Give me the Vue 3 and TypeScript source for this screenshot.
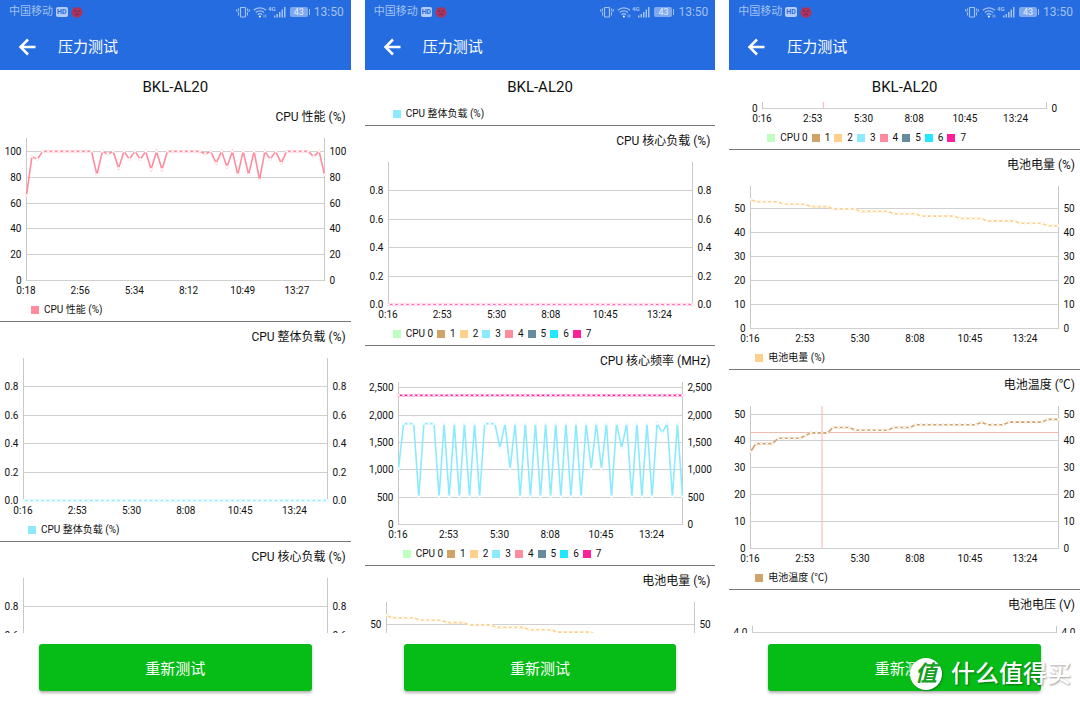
<script setup lang="ts">
import { computed, onBeforeUnmount, onMounted, ref } from 'vue'

interface LegendItem {
  color: string
  label: string
}

interface Series {
  color: string
  values: number[]
}

interface Chart {
  title: string
  inset: number
  max: number
  ticks: { value: number; label: string }[]
  times: string[]
  series: Series[]
  legend: LegendItem[]
}

interface Slice {
  chart: Chart
  from: number
  to: number
  marker?: number
}

const PLOT_TOP = 4
const PLOT_BOTTOM = 146
const CHART_HEIGHT = 164

const repeat = (value: number, count: number): number[] => Array(count).fill(value)
const runs = (pairs: [number, number][]): number[] => pairs.flatMap(([value, count]) => repeat(value, count))
const steps = (values: number[], digits = 0) =>
  values.map((value) => ({
    value,
    label: digits ? value.toFixed(digits) : value.toLocaleString('en-US'),
  }))

const times = ['0:16', '2:53', '5:30', '8:08', '10:45', '13:24']

const coreLegend: LegendItem[] = [
  { color: '#c0ffc0', label: 'CPU 0' },
  { color: '#cfa268', label: '1' },
  { color: '#ffd08c', label: '2' },
  { color: '#8ceaff', label: '3' },
  { color: '#ff8c9d', label: '4' },
  { color: '#668b9f', label: '5' },
  { color: '#22e8ff', label: '6' },
  { color: '#ff1f9b', label: '7' },
]

const performance: Chart = {
  title: 'CPU 性能 (%)',
  inset: 26,
  max: 110,
  ticks: steps([0, 20, 40, 60, 80, 100]),
  times: ['0:18', '2:56', '5:34', '8:12', '10:49', '13:27'],
  series: [
    {
      color: '#ff8c9d',
      values: [
        66, 96, 94, ...repeat(100, 10), 82, 100, 98, 100, 87, 100, 94, 100, 94, 100, 86, 100, 86,
        ...repeat(100, 7), 98, 100, 91, 100, 88, 100, 82, 100, 82, 100, 78, 100, 94, 100, 91,
        ...repeat(100, 5), 96, 100, 82,
      ],
    },
  ],
  legend: [{ color: '#ff8c9d', label: 'CPU 性能 (%)' }],
}

const totalLoad: Chart = {
  title: 'CPU 整体负载 (%)',
  inset: 23,
  max: 1,
  ticks: steps([0, 0.2, 0.4, 0.6, 0.8], 1),
  times,
  series: [{ color: '#8ceaff', values: repeat(0, 57) }],
  legend: [{ color: '#8ceaff', label: 'CPU 整体负载 (%)' }],
}

const coreLoad: Chart = {
  title: 'CPU 核心负载 (%)',
  inset: 23,
  max: 1,
  ticks: steps([0, 0.2, 0.4, 0.6, 0.8], 1),
  times,
  series: [{ color: '#ff6db8', values: repeat(0, 57) }],
  legend: coreLegend,
}

const H = 1844
const L = 509
const coreFrequency: Chart = {
  title: 'CPU 核心频率 (MHz)',
  inset: 33,
  max: 2596,
  ticks: steps([0, 500, 1000, 1500, 2000, 2500]),
  times,
  series: [
    {
      color: '#8ceaff',
      values: [
        1020, H, H, H, L, H, H, H, L, H, L, H, L, H, L, H, L, H, H, H, 1402, H, 1018, H, L, H, L, H, L,
        H, L, H, L, H, L, H, L, H, 1018, H, 1018, H, L, H, 1402, H, L, H, L, H, L, H, 1680, H, L, H, L,
      ],
    },
    { color: '#ff1f9b', values: repeat(2361, 57) },
  ],
  legend: coreLegend,
}

const batteryLevel: Chart = {
  title: '电池电量 (%)',
  inset: 21,
  max: 59.4,
  ticks: steps([0, 10, 20, 30, 40, 50]),
  times,
  series: [
    {
      color: '#ffd08c',
      values: runs([
        [54, 1], [53, 5], [52, 5], [51, 4], [50, 5], [49, 6], [48, 5], [47, 7], [46, 5], [45, 6], [44, 5], [43, 3],
      ]),
    },
  ],
  legend: [{ color: '#ffd08c', label: '电池电量 (%)' }],
}

const batteryTemperature: Chart = {
  title: '电池温度 (℃)',
  inset: 21,
  max: 52.8,
  ticks: steps([0, 10, 20, 30, 40, 50]),
  times,
  series: [
    {
      color: '#cfa268',
      values: runs([
        [36, 1], [39, 4], [41, 5], [42, 1], [43, 4], [45, 4], [44, 7], [45, 4], [46, 12], [47, 1], [46, 4], [47, 7], [48, 3],
      ]),
    },
  ],
  legend: [{ color: '#cfa268', label: '电池温度 (℃)' }],
}

const batteryVoltage: Chart = {
  title: '电池电压 (V)',
  inset: 23,
  max: 4.18,
  ticks: steps([4], 1),
  times,
  series: [],
  legend: [],
}

const whole = (chart: Chart, marker?: number): Slice => ({ chart, from: 0, to: CHART_HEIGHT, marker })

const phones: Slice[][] = [
  [whole(performance), whole(totalLoad), { chart: coreLoad, from: 0, to: 64 }],
  [
    { chart: totalLoad, from: CHART_HEIGHT, to: CHART_HEIGHT },
    whole(coreLoad),
    whole(coreFrequency),
    { chart: batteryLevel, from: 0, to: 36 },
  ],
  [
    { chart: coreFrequency, from: 140, to: CHART_HEIGHT, marker: 12 },
    whole(batteryLevel),
    whole(batteryTemperature, 13),
    { chart: batteryVoltage, from: 0, to: 12 },
  ],
]

const root = ref<HTMLElement | null>(null)
const width = ref(351)
let observer: ResizeObserver | undefined

onMounted(() => {
  observer = new ResizeObserver(() => {
    const phone = root.value?.querySelector('.phone')
    if (phone) width.value = Math.round(phone.getBoundingClientRect().width)
  })
  if (root.value) observer.observe(root.value)
})
onBeforeUnmount(() => observer?.disconnect())

const toY = (chart: Chart, value: number) => PLOT_BOTTOM - (value / chart.max) * (PLOT_BOTTOM - PLOT_TOP)

const layout = (slice: Slice) => {
  const { chart, from, to, marker } = slice
  const left = chart.inset
  const right = width.value - chart.inset - 1
  const count = (chart.series[0]?.values.length ?? 57) - 1
  const toX = (index: number) => left + (index / count) * (right - left)
  return {
    ...slice,
    left: left + 0.5,
    right: right + 0.5,
    ticks: chart.ticks
      .map((tick) => ({ label: tick.label, y: Math.round(toY(chart, tick.value)) }))
      .filter((tick) => tick.y > from - 4 && tick.y < to + 4),
    times: to === CHART_HEIGHT ? chart.times.map((label, i) => ({ label, x: toX(i * 10) })) : [],
    lines: chart.series.map((series) => {
      const points = series.values.map((value, i) => ({ x: toX(i) + 0.5, y: toY(chart, value) + 0.5 }))
      return { color: series.color, points, path: points.map((p) => `${p.x.toFixed(1)},${p.y.toFixed(1)}`).join(' ') }
    }),
    markerX: marker === undefined ? null : toX(marker) + 0.5,
    markerY: marker === undefined ? null : Math.round(toY(chart, chart.series[0].values[marker])) + 0.5,
  }
}

const screens = computed(() => phones.map((slices) => slices.map(layout)))
</script>

<template>
  <div ref="root" class="page">
    <main v-for="(slices, p) in screens" :key="p" class="phone">
      <header class="top">
        <div class="status">
          <span class="carrier">中国移动</span>
          <span class="hd">HD</span>
          <svg class="face" width="12" height="12" viewBox="0 0 12 12">
            <path d="M2.400 1 4 1.800a5 5 0 0 1 4 0L9.600 1l.5 2.200A5 5 0 0 1 6 11.600 5 5 0 0 1 1.900 3.200z" fill="#b03257" />
            <path d="m3 4.600 2.100 1M9 4.600l-2.100 1M4 8.900q2-1.800 4 0" stroke="#5a2a66" stroke-width="1" fill="none" />
          </svg>
          <span class="spacer"></span>
          <svg width="14" height="12" viewBox="0 0 14 12" fill="none" stroke="currentColor">
            <rect x="4.500" y="1.500" width="5" height="9.500" rx=".5" stroke-width="1.200" />
            <path d="M2.500 2.500v2l-.8 1 .8 1v3M.7 3v2.500M11.500 2.500v2l.8 1-.8 1v3M13.300 3v2.500" />
          </svg>
          <svg class="wifi" width="14" height="12" viewBox="0 0 14 12" fill="none" stroke="currentColor" stroke-width="1.300">
            <path d="M.8 4.300a9 9 0 0 1 12.200 0M2.800 6.500a6 6 0 0 1 8.200 0M4.700 8.700a3.200 3.200 0 0 1 4.400 0" />
            <circle cx="6.900" cy="10.500" r="1" fill="currentColor" stroke="none" />
            <path d="M11 8.500v3M12.800 8.500v3" stroke-width=".8" />
          </svg>
          <svg class="signal" width="19" height="12" viewBox="0 0 19 12" fill="currentColor">
            <text x="0" y="5" font-size="6" font-weight="700">4G</text>
            <path d="M6 9.500h1.500v2H6zM8.500 8h1.500v3.500H8.500zM11 6h1.500v5.500H11zM13.500 3.500H15v8h-1.500zM16 1h1.500v10.500H16z" />
          </svg>
          <span class="battery">43</span>
          <span>13:50</span>
        </div>
        <div class="bar">
          <button class="back" type="button" aria-label="返回">
            <svg width="18" height="18" viewBox="0 0 18 18" fill="none" stroke="#fff" stroke-width="2.500">
              <path d="M17.500 9H3M10 1.500 2.500 9l7.500 7.500" />
            </svg>
          </button>
          <span class="name">压力测试</span>
        </div>
      </header>

      <h1>BKL-AL20</h1>

      <div class="charts">
        <section v-for="(s, i) in slices" :key="i">
          <h2 v-if="s.from === 0">{{ s.chart.title }}</h2>
          <svg
            v-if="s.to > s.from"
            class="plot"
            :width="width"
            :height="s.to - s.from"
            :viewBox="`0 ${s.from} ${width} ${s.to - s.from}`"
          >
            <g v-for="tick in s.ticks" :key="tick.label">
              <line class="grid" :x1="s.left" :x2="s.right" :y1="tick.y + 0.5" :y2="tick.y + 0.5" />
              <text :x="s.left - 5" :y="tick.y + 4" text-anchor="end">{{ tick.label }}</text>
              <text :x="s.right + 5" :y="tick.y + 4">{{ tick.label }}</text>
            </g>
            <line class="axis" :x1="s.left" :x2="s.left" y1="4" y2="147" />
            <line class="axis" :x1="s.right" :x2="s.right" y1="4" y2="147" />
            <text v-for="time in s.times" :key="time.label" :x="time.x" y="160" text-anchor="middle">{{ time.label }}</text>
            <line v-if="s.markerX && s.markerY" class="marker-h" :x1="s.left" :x2="s.right" :y1="s.markerY" :y2="s.markerY" />
            <g v-for="line in s.lines" :key="line.color">
              <polyline class="line" :points="line.path" :stroke="line.color" />
              <circle v-for="(dot, d) in line.points" :key="d" :cx="dot.x" :cy="dot.y" r="1.400" :stroke="line.color" />
            </g>
            <line v-if="s.markerX" class="marker-v" :x1="s.markerX" :x2="s.markerX" y1="4" y2="146" />
          </svg>
          <ul v-if="s.to === 164" :style="{ paddingLeft: s.chart.inset + 5 + 'px' }">
            <li v-for="item in s.chart.legend" :key="item.label">
              <i :style="{ background: item.color }"></i>{{ item.label }}
            </li>
          </ul>
        </section>
      </div>

      <footer>
        <button class="retry" type="button">重新测试</button>
      </footer>
    </main>

    <div class="watermark">
      <span class="seal">值</span>
      <span>什么值得买</span>
    </div>
  </div>
</template>

<style>
body {
  margin: 0;
  background: #fff;
}
</style>

<style scoped>
.page {
  position: relative;
  display: grid;
  grid-template-columns: repeat(3, minmax(0, 1fr));
  gap: 14px;
  height: 100vh;
  overflow: hidden;
  color: #111;
  font-family: Roboto, "Noto Sans CJK SC", sans-serif;
}
.phone {
  display: flex;
  flex-direction: column;
  min-height: 0;
}
.top {
  flex: none;
  background: #246ce0;
  color: #fff;
}
.status {
  display: flex;
  align-items: center;
  height: 24px;
  padding: 0 7px 0 9px;
  color: #a3c1f3;
  font-size: 12px;
  line-height: 24px;
}
.carrier {
  font-size: 11px;
}
.hd {
  margin-left: 3px;
  padding: 0 1px;
  border-radius: 2px;
  background: #b4ccf6;
  color: #246ce0;
  font-size: 7px;
  font-weight: 700;
  line-height: 10px;
}
.face {
  margin-left: 3px;
}
.spacer {
  flex: 1;
}
.wifi {
  margin-left: 3px;
}
.signal {
  margin-left: 1px;
}
.battery {
  position: relative;
  width: 18px;
  margin: 0 6px 0 3px;
  border-radius: 2px;
  background: #7fa9ee;
  color: #e4eefc;
  font-size: 9px;
  line-height: 10px;
  text-align: center;
}
.battery::after {
  content: "";
  position: absolute;
  top: 2px;
  right: -2px;
  width: 1px;
  height: 6px;
  background: #9dbdf2;
}
.bar {
  display: flex;
  align-items: center;
  gap: 22px;
  height: 46px;
  padding-left: 18px;
}
.back {
  display: flex;
  padding: 0;
  border: 0;
  background: none;
}
.name {
  font-size: 15px;
  line-height: 20px;
}
h1 {
  flex: none;
  margin: 0;
  padding-top: 2px;
  font-size: 15px;
  font-weight: 400;
  line-height: 30px;
  text-align: center;
}
.charts {
  flex: 1;
  min-height: 0;
  overflow: hidden;
}
section {
  border-bottom: 1px solid #777;
}
h2 {
  box-sizing: border-box;
  height: 32px;
  margin: 0;
  padding: 0 5px;
  font-size: 12px;
  font-weight: 400;
  line-height: 30px;
  text-align: right;
}
.plot {
  display: block;
  overflow: hidden;
  font-size: 10px;
}
.plot text {
  fill: #111;
}
.grid {
  stroke: #d0d0d0;
}
.axis {
  stroke: #c8c8c8;
}
.line {
  fill: none;
  stroke-width: 1.6;
}
circle {
  fill: #fff;
  stroke-width: 0.6;
  stroke-opacity: 0.3;
}
.marker-h {
  stroke: #eebbb4;
}
.marker-v {
  stroke: #ffb0b0;
}
ul {
  display: flex;
  gap: 4px;
  margin: 0;
  padding: 0;
  list-style: none;
  font-size: 10px;
  line-height: 23px;
}
li {
  display: flex;
  align-items: center;
  gap: 5px;
  height: 23px;
  white-space: nowrap;
}
li i {
  width: 8px;
  height: 8px;
}
footer {
  flex: none;
  padding: 11px 39px 10px;
}
.retry {
  display: block;
  width: 100%;
  height: 47px;
  border: 0;
  border-radius: 3px;
  background: #06bc16;
  box-shadow: 0 2px 3px rgba(0, 0, 0, 0.3);
  color: #fff;
  font: 15px Roboto, "Noto Sans CJK SC", sans-serif;
}
.watermark {
  position: absolute;
  right: 9px;
  bottom: 11px;
  display: flex;
  align-items: center;
  gap: 9px;
  color: #fff;
  font-size: 24px;
  font-weight: 500;
  line-height: 32px;
  text-shadow: 1px 1px 2px rgba(0, 0, 0, 0.4);
}
.seal {
  width: 32px;
  height: 32px;
  border-radius: 50%;
  background: #fff;
  box-shadow: 1px 1px 2px rgba(0, 0, 0, 0.3);
  color: #14a022;
  font-size: 22px;
  font-style: italic;
  font-weight: 700;
  text-align: center;
  text-shadow: none;
}
</style>
